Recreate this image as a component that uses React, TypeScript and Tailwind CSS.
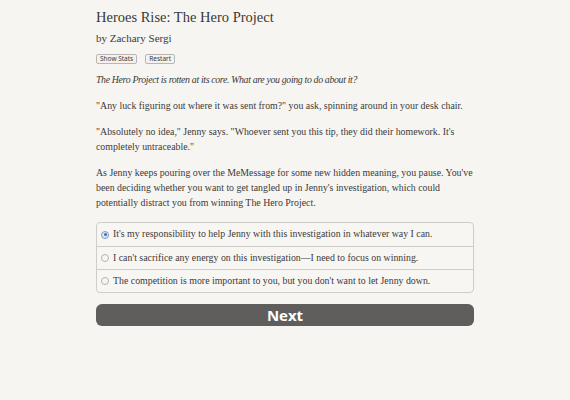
import React from "react";

const serif = { fontFamily: '"Liberation Serif", "DejaVu Serif", serif' };

export default function App() {
  const options = [
    "It's my responsibility to help Jenny with this investigation in whatever way I can.",
    "I can't sacrifice any energy on this investigation\u2014I need to focus on winning.",
    "The competition is more important to you, but you don't want to let Jenny down.",
  ];
  return (
    <div className="w-[570px] h-[400px] bg-[#f7f5f2] text-[#3b3a38] overflow-hidden" style={serif}>
      <div className="w-[378px] mx-auto pt-[8px]">
        <h1 className="text-[14.5px] leading-[18px] text-[#3a3937]">Heroes Rise: The Hero Project</h1>
        <div className="text-[11px] leading-[13px] mt-[6px]">by Zachary Sergi</div>
        <div className="flex gap-[8px] mt-[9px]">
          <button className="text-[6.5px] leading-[8px] px-[3px] border border-[#b9b7b4] bg-[#f3f2f0] rounded-[2px] font-sans">Show Stats</button>
          <button className="text-[6.5px] leading-[8px] px-[3px] border border-[#b9b7b4] bg-[#f3f2f0] rounded-[2px] font-sans">Restart</button>
        </div>
        <div className="text-[9.85px] leading-[15px] mt-[8px]">
          <p className="italic tracking-[-0.35px]">The Hero Project is rotten at its core. What are you going to do about it?</p>
          <p className="mt-[11px]">"Any luck figuring out where it was sent from?" you ask, spinning around in your desk chair.</p>
          <p className="mt-[11px]">"Absolutely no idea," Jenny says. "Whoever sent you this tip, they did their homework. It's completely untraceable."</p>
          <p className="mt-[11px]">As Jenny keeps pouring over the MeMessage for some new hidden meaning, you pause. You've been deciding whether you want to get tangled up in Jenny's investigation, which could potentially distract you from winning The Hero Project.</p>
        </div>
        <div className="mt-[12px] border border-[#cfcdca] rounded-[4px] bg-[#f8f6f3]">
          {options.map((o, i) => (
            <div key={i} className={`flex items-center h-[23px] pl-[4px] text-[9.85px] ${i > 0 ? "border-t border-[#cfcdca]" : ""}`}>
              <span className={`w-[8px] h-[8px] rounded-full border flex items-center justify-center mr-[4px] ${i === 0 ? "border-[#7d9bc4] bg-[#dfe9f6]" : "border-[#b5b3b0] bg-[#f7f6f4]"}`}>
                {i === 0 && <span className="w-[3px] h-[3px] rounded-full bg-[#3d6fb3]" />}
              </span>
              <span>{o}</span>
            </div>
          ))}
        </div>
        <button className="mt-[11px] w-full h-[22px] rounded-[6px] bg-[#5f5e5c] text-white font-bold text-[15px] leading-[22px]" style={{ fontFamily: '"Open Sans", "DejaVu Sans", sans-serif' }}>Next</button>
      </div>
    </div>
  );
}
